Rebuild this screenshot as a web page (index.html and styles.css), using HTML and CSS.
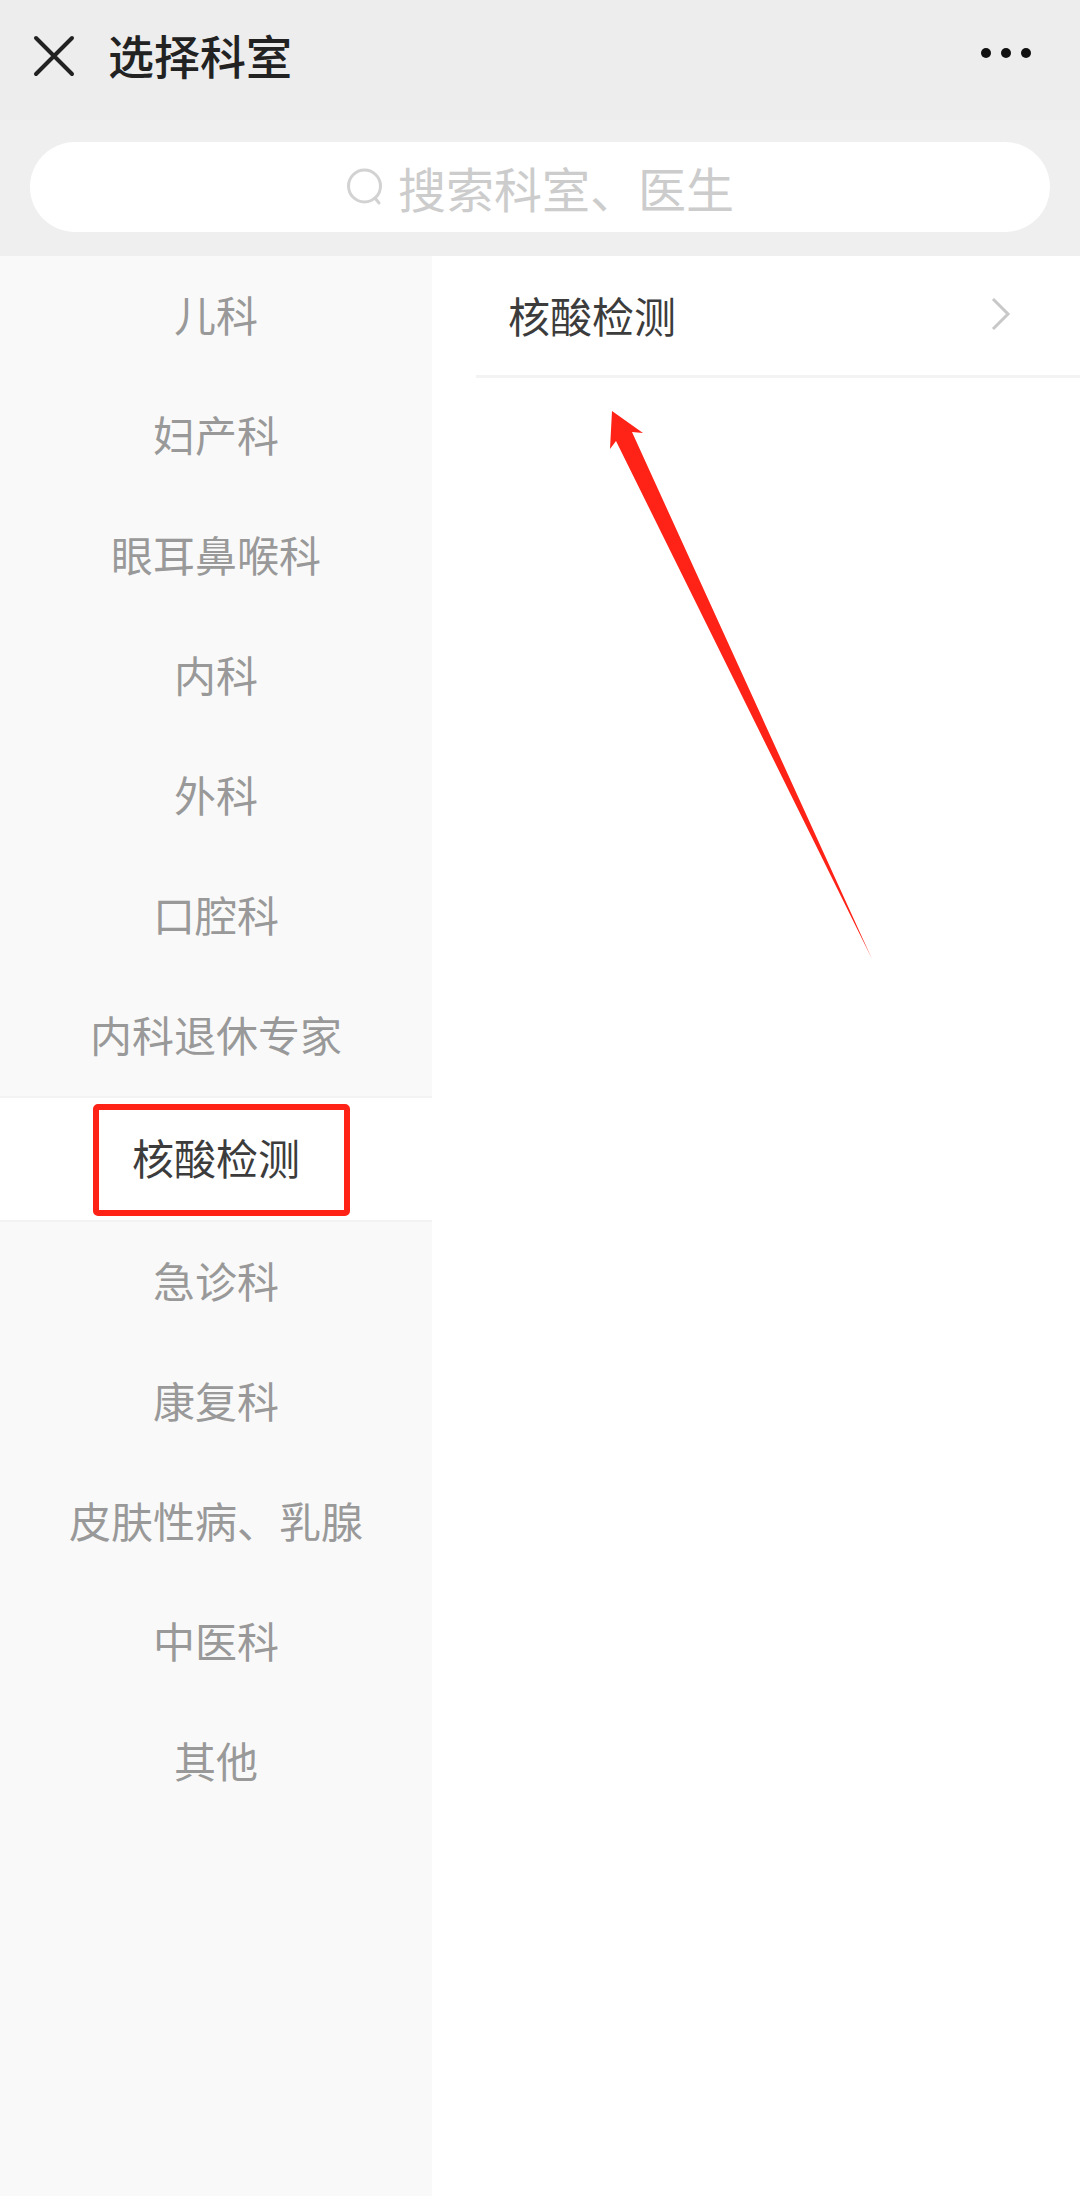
FILE: index.html
```html
<!DOCTYPE html>
<html lang="zh-CN">
<head>
  <meta charset="UTF-8">
  <meta name="viewport" content="width=device-width, initial-scale=1">
  <title>选择科室</title>
  <link rel="stylesheet" href="styles.css">
</head>
<body>

  <header class="topbar">
    <svg class="close-icon" width="42" height="42" viewBox="0 0 42 42">
      <path d="M3 3 L39 39 M39 3 L3 39" stroke="#222" stroke-width="4" stroke-linecap="round" fill="none"/>
    </svg>
    <h1 class="page-title">选择科室</h1>
    <div class="more">
      <span class="dot"></span>
      <span class="dot"></span>
      <span class="dot"></span>
    </div>
  </header>

  <div class="search-wrap">
    <div class="search-bar">
      <svg class="search-icon" width="38" height="38" viewBox="0 0 38 38">
        <circle cx="18.5" cy="18" r="16" stroke="#d2d2d2" stroke-width="3" fill="none"/>
        <path d="M29 30 L33 35" stroke="#d2d2d2" stroke-width="3" stroke-linecap="round" fill="none"/>
      </svg>
      <span class="search-text">搜索科室、医生</span>
    </div>
  </div>

  <div class="main">
    <!-- 左侧科室列表 -->
    <aside class="dept-list">
      <div class="dept">儿科</div>
      <div class="dept">妇产科</div>
      <div class="dept">眼耳鼻喉科</div>
      <div class="dept">内科</div>
      <div class="dept">外科</div>
      <div class="dept">口腔科</div>
      <div class="dept">内科退休专家</div>
      <div class="dept active">核酸检测</div>
      <div class="dept">急诊科</div>
      <div class="dept">康复科</div>
      <div class="dept">皮肤性病、乳腺</div>
      <div class="dept">中医科</div>
      <div class="dept">其他</div>
    </aside>

    <section class="sub-list">
      <div class="sub-item">
        <span class="sub-name">核酸检测</span>
        <svg class="chevron" width="20" height="34" viewBox="0 0 20 34">
          <path d="M2 2 L17 17 L2 32" stroke="#c8c8c8" stroke-width="3" fill="none"/>
        </svg>
      </div>
    </section>
  </div>

  <!-- 红色标注 -->
  <div class="mark-box"></div>
  <svg class="mark-arrow" width="1080" height="2196" viewBox="0 0 1080 2196">
    <polygon points="612,411 643,433 632,432 872,959 616,441 610,449" fill="#ff2317"/>
  </svg>

</body>
</html>
```

FILE: styles.css
```css
body {
  margin: 0;
  width: 1080px;
  height: 2196px;
  position: relative;
  overflow: hidden;
  background-color: #fff;
  font-family: "Noto Sans CJK SC", "Noto Sans", sans-serif;
}
.topbar {
  height: 120px;
  background-color: #ededed;
  display: flex;
  align-items: center;
  padding: 0 33px;
  box-sizing: border-box;
}
.close-icon {
  margin-right: 33px;
  margin-top: -8px;
}
.page-title {
  margin: -13px 0 0;
  font-size: 46px;
  font-weight: 500;
  color: #222;
}
.more {
  margin-left: auto;
  display: flex;
  gap: 10px;
  margin-top: -14px;
  margin-right: 16px;
}
.dot {
  width: 10px;
  height: 10px;
  border-radius: 50%;
  background-color: #111;
}
.search-wrap {
  height: 136px;
  background-color: #efefef;
  padding: 22px 30px 0;
  box-sizing: border-box;
}
.search-bar {
  height: 90px;
  background-color: #fff;
  border-radius: 45px;
  display: flex;
  align-items: center;
  justify-content: center;
  gap: 14px;
  font-size: 48px;
  color: #ccc;
}
.main {
  display: flex;
  height: 1940px;
}
.dept-list {
  width: 432px;
  background-color: #f9f9f9;
}
.dept {
  height: 120px;
  padding-bottom: 6px;
  box-sizing: border-box;
  display: flex;
  align-items: center;
  justify-content: center;
  font-size: 42px;
  color: #999;
}
.dept.active {
  height: 126px;
  background-color: #fff;
  color: #3c3c3c;
  border-top: 2px solid #f3f3f3;
  border-bottom: 2px solid #f3f3f3;
}
.sub-list {
  flex: 1;
  padding-left: 44px;
}
.sub-item {
  height: 122px;
  box-sizing: border-box;
  border-bottom: 3px solid #f3f3f3;
  display: flex;
  align-items: center;
  justify-content: space-between;
  padding: 0 69px 3px 32px;
  font-size: 42px;
  color: #3c3c3c;
}

/* annotations */
.mark-box {
  position: absolute;
  left: 93px;
  top: 1104px;
  width: 257px;
  height: 112px;
  border: 6px solid #ff2317;
  border-radius: 5px;
  box-sizing: border-box;
}
.mark-arrow {
  position: absolute;
  left: 0;
  top: 0;
}
```
